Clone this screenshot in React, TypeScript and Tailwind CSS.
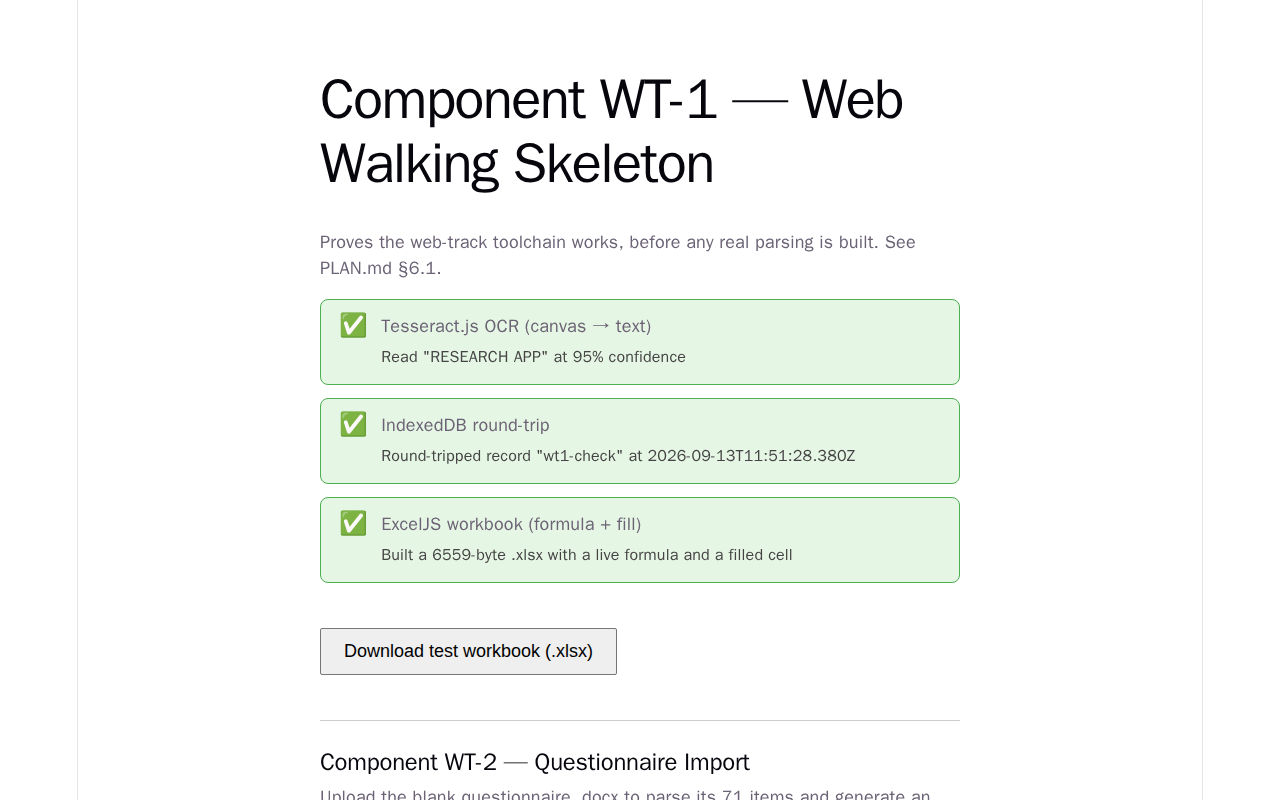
interface CheckResult {
  name: string;
  detail: string;
}

const checks: CheckResult[] = [
  {
    name: 'Tesseract.js OCR (canvas → text)',
    detail: 'Read "RESEARCH APP" at 95% confidence',
  },
  {
    name: 'IndexedDB round-trip',
    detail: 'Round-tripped record "wt1-check" at 2026-09-13T11:51:28.380Z',
  },
  {
    name: 'ExcelJS workbook (formula + fill)',
    detail: 'Built a 6559-byte .xlsx with a live formula and a filled cell',
  },
];

function CheckRow({ name, detail }: CheckResult) {
  return (
    <li className="flex gap-[13px] rounded-lg border border-[#4caf50] bg-[#e6f6e4] px-[18px] pt-3 pb-[14px]">
      <span className="text-[23px] leading-[28px]">✅</span>
      <div>
        <p className="leading-[28px]">{name}</p>
        <p className="mt-1 text-base leading-[26px] text-[#444]">{detail}</p>
      </div>
    </li>
  );
}

export default function App() {
  return (
    <div className="mx-auto min-h-screen w-full max-w-[1126px] border-x border-[#e5e4e7] bg-white font-['WenQuanYi_Zen_Hei','Liberation_Sans',Arial,sans-serif] text-[18px] tracking-[0.18px] text-[#6b6375]">
      <main className="mx-auto max-w-[640px] pt-[68px]">
        <h1 className="text-[56px] leading-[64px] tracking-[-1.68px] text-[#08060d]">
          Component WT-1 — Web Walking Skeleton
        </h1>
        <p className="mt-[33px] leading-[26px]">
          Proves the web-track toolchain works, before any real parsing is
          built. See PLAN.md §6.1.
        </p>
        <ul className="mt-[18px] flex flex-col gap-[13px]">
          {checks.map((check) => (
            <CheckRow key={check.name} {...check} />
          ))}
        </ul>
        <button
          type="button"
          className="mt-[45px] rounded-[2px] border border-[#767676] bg-[#efefef] px-[23px] py-[9px] font-['Liberation_Sans',Arial,sans-serif] leading-[27px] tracking-normal text-black"
        >
          Download test workbook (.xlsx)
        </button>
        <hr className="mt-[45px] border-[#ccc]" />
        <section>
          <h2 className="mt-[27px] text-2xl leading-[28px] tracking-[-0.24px] text-[#08060d]">
            Component WT-2 — Questionnaire Import
          </h2>
          <p className="mt-2 leading-[26px]">
            Upload the blank questionnaire .docx to parse its 71 items and
            generate an Excel template.
          </p>
        </section>
      </main>
    </div>
  );
}
